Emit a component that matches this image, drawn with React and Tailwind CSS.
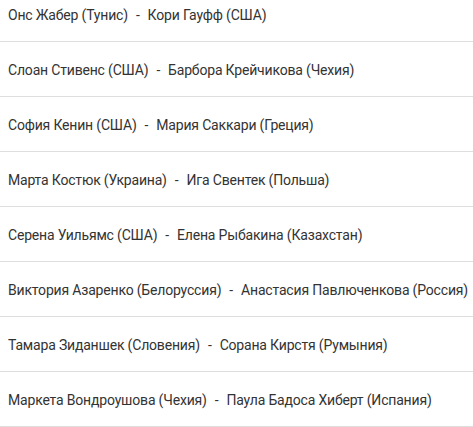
import React from 'react'

const matches = [
  ['Онс Жабер (Тунис)', 'Кори Гауфф (США)'],
  ['Слоан Стивенс (США)', 'Барбора Крейчикова (Чехия)'],
  ['София Кенин (США)', 'Мария Саккари (Греция)'],
  ['Марта Костюк (Украина)', 'Ига Свентек (Польша)'],
  ['Серена Уильямс (США)', 'Елена Рыбакина (Казахстан)'],
  ['Виктория Азаренко (Белоруссия)', 'Анастасия Павлюченкова (Россия)'],
  ['Тамара Зиданшек (Словения)', 'Сорана Кирстя (Румыния)'],
  ['Маркета Вондроушова (Чехия)', 'Паула Бадоса Хиберт (Испания)'],
]

const App = () => {
  return (
    <div className="w-[473px] h-[427px] overflow-hidden bg-white">
      <ul className="mt-[-13px] font-['Roboto',sans-serif] text-[14px] tracking-[-0.18px] text-[#333]">
        {matches.map(([a, b], i) => (
          <li
            key={i}
            className="h-[55px] flex items-center pl-2 pt-[2px] border-b border-[#dedede] whitespace-nowrap"
          >
            {a}
            <span className="mx-[8px]">-</span>
            {b}
          </li>
        ))}
      </ul>
    </div>
  )
}

export default App
